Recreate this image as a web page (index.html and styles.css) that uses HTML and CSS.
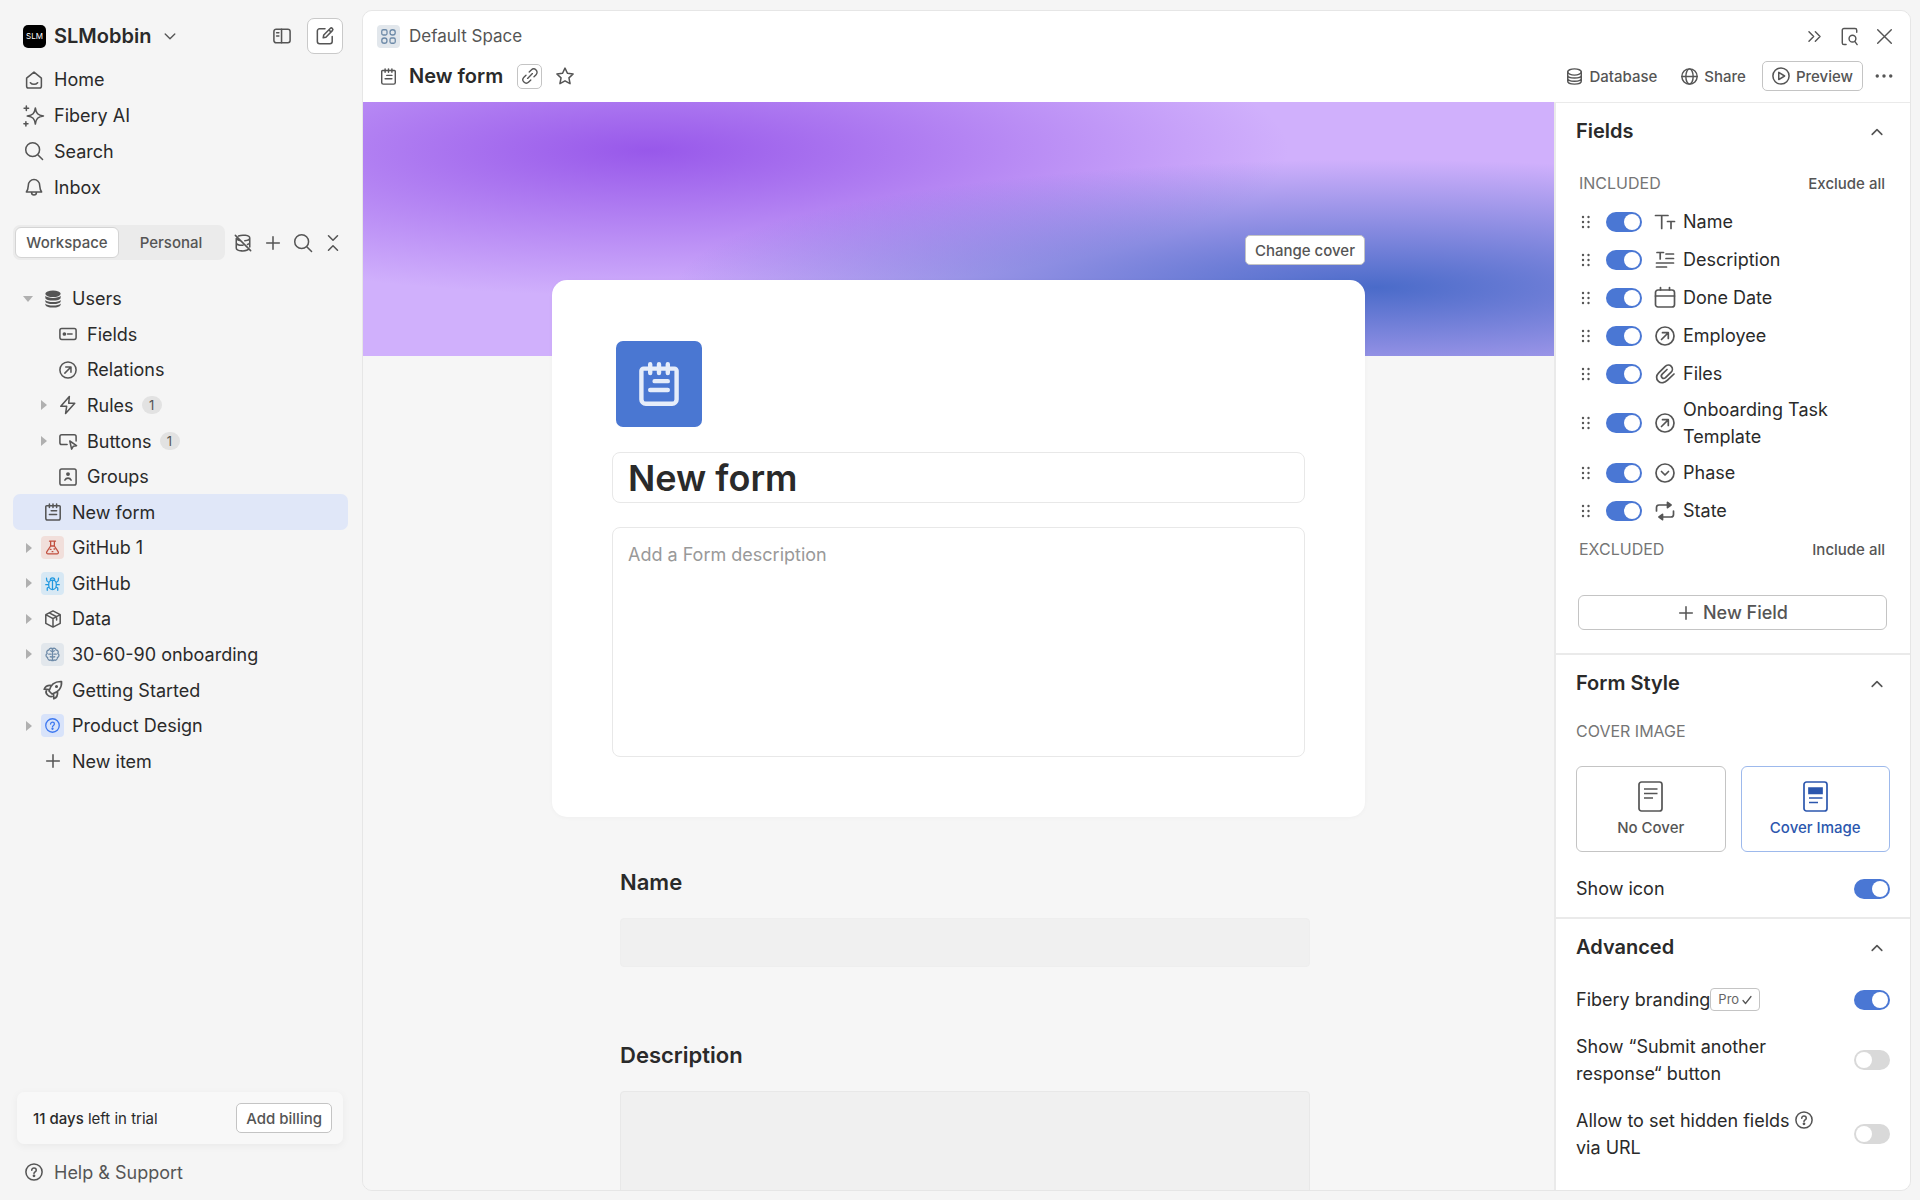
FILE: index.html
```html
<!DOCTYPE html>
<html lang="en">
<head>
  <meta charset="UTF-8">
  <meta name="viewport" content="width=device-width, initial-scale=1.0">
  <title>New form</title>
  <link rel="stylesheet" href="styles.css">
</head>
<body>
<!-- Icon sprite -->
<svg class="sprite" aria-hidden="true">
  <symbol id="i-chevron-down" viewBox="0 0 20 20"><path d="M4 7.500l6 6 6-6"/></symbol>
  <symbol id="i-chevron-up" viewBox="0 0 20 20"><path d="M4 13l6-6 6 6"/></symbol>
  <symbol id="i-panel" viewBox="0 0 20 20"><rect x="1" y="2.500" width="18" height="15" rx="2.500"/><path d="M9.500 2.500v15M4 6.500h2.500M4 10h2.500"/></symbol>
  <symbol id="i-compose" viewBox="0 0 20 20"><path d="M10 2H4a2.500 2.500 0 0 0-2.500 2.500V16A2.500 2.500 0 0 0 4 18.500h11.500A2.500 2.500 0 0 0 18 16v-5.500M8 12l.6-3.200 7.200-7.200a1.600 1.600 0 0 1 2.400 2.400L11 11.300zM14.300 3.200l2.400 2.400"/></symbol>
  <symbol id="i-home" viewBox="0 0 20 20"><path d="M1.800 8L10 1.200 18.200 8v9a2 2 0 0 1-2 2H3.800a2 2 0 0 1-2-2zM6 13c2 2.400 6 2.400 8 0"/></symbol>
  <symbol id="i-ai" viewBox="0 0 20 20"><path d="M11.500 1c.9 6.300 2.700 8.100 9 9-6.300.9-8.100 2.700-9 9-.9-6.300-2.700-8.100-9-9 6.300-.9 8.100-2.700 9-9zM1.500-1v5M-1 1.500h5M1 16.500v4.500M-1.200 18.700h4.500"/></symbol>
  <symbol id="i-search" viewBox="0 0 20 20"><circle cx="8.500" cy="8.500" r="7.700"/><path d="M14.200 14.200L19.500 19.500"/></symbol>
  <symbol id="i-bell" viewBox="0 0 20 20"><path d="M1.500 15.500c2-2.500 2-4 2.200-7.500a6.300 6.300 0 0 1 12.600 0c.2 3.500.2 5 2.200 7.500zM7.300 16c0 3.700 5.400 3.700 5.400 0"/></symbol>
  <symbol id="i-db-off" viewBox="0 0 20 20"><path d="M5 2.200C9 .6 17.500 1.200 17.500 4.500c0 1.600-2.500 2.800-5.500 3M2.500 5v10.500c0 4 11.500 4.300 14.300 1M17.500 4.500v10M2.500 10c.5 1.800 4 2.700 7.500 2.600M15 11.700c1.500-.5 2.500-1.300 2.500-2.200M3 5.500c.8 1 2.400 1.700 4.300 2M1.500 1.500l17 17"/></symbol>
  <symbol id="i-plus" viewBox="0 0 20 20"><path d="M10 3v14M3 10h14"/></symbol>
  <symbol id="i-collapse" viewBox="0 0 20 20"><path d="M5 2l5 5 5-5M5 18l5-5 5 5"/></symbol>
  <symbol id="i-db-solid" viewBox="0 0 20 20"><g fill="currentColor" stroke="none"><ellipse cx="10" cy="4.200" rx="8.500" ry="3.700"/><path d="M1.500 6.500c2 3 15 3 17 0v2c0 4.200-17 4.200-17 0zM1.500 11c2 3 15 3 17 0v1.500c0 4.200-17 4.200-17 0zM1.500 15c2 3 15 3 17 0v1c0 4.600-17 4.600-17 0z"/></g></symbol>
  <symbol id="i-fields" viewBox="0 0 20 20"><rect x="1" y="4" width="18" height="12" rx="2"/><path d="M9.500 10h5"/><circle cx="6" cy="10" r="1.200" fill="currentColor"/></symbol>
  <symbol id="i-relation" viewBox="0 0 20 20"><circle cx="10" cy="10" r="9"/><path d="M6.500 13.500l6.500-6.500M7.500 6.700h5.800v5.800"/></symbol>
  <symbol id="i-bolt" viewBox="0 0 20 20"><path d="M11.500.5L2 11.500h6.500l-1.200 8L17.500 8H10.800z"/></symbol>
  <symbol id="i-button" viewBox="0 0 20 20"><path d="M9 14H3a2 2 0 0 1-2-2V5a2 2 0 0 1 2-2h14a2 2 0 0 1 2 2v5M12 10l7.500 5.200-3.700.7-1.800 3.200z"/></symbol>
  <symbol id="i-group" viewBox="0 0 20 20"><rect x="1" y="1" width="18" height="18" rx="2"/><circle cx="10" cy="6.800" r="1.300" fill="currentColor"/><path d="M6.500 13.500c1.500-3 5.500-3 7 0"/></symbol>
  <symbol id="i-form" viewBox="0 0 20 20"><path d="M3 3h14a1 1 0 0 1 1 1v13a2 2 0 0 1-2 2H4a2 2 0 0 1-2-2V4a1 1 0 0 1 1-1zM6 1v4M10 1v4M14 1v4M8 8.700h6M6 12.700h8"/></symbol>
  <symbol id="i-flask" viewBox="0 0 20 20"><path d="M6 1.500h8M7.500 1.500V8L2.500 15.500c-1 1.700 0 3 1.700 3h11.600c1.700 0 2.700-1.300 1.700-3L12.500 8V1.500M7.500 8h5M7 12.500h1M12 12h1M9.500 15.500h1"/></symbol>
  <symbol id="i-bug" viewBox="0 0 20 20"><path d="M5 10.500a5 5 0 0 1 10 0v2.500a5 5 0 0 1-10 0zM10 6v12M7 5.500a3 3 0 0 1 6 0M5 8.500L2.500 6.500 2 3M15 8.500l2.500-2L18 3M5 11.500H1M15 11.500h4M5.500 14.500L3 16v3M14.500 14.500L17 16v3"/></symbol>
  <symbol id="i-box" viewBox="0 0 20 20"><path d="M10 1l8 4.200v9.600L10 19l-8-4.200V5.200zM2 5.200l8 4.300 8-4.300M10 9.500V19M5.800 3.200l8.200 4.300v3.500"/></symbol>
  <symbol id="i-brain" viewBox="0 0 20 20"><path d="M10 2v16M10 3C8.500.8 5.500 1.500 5.300 4 2.500 4 1.500 7 3 8.500 .5 10 1 13.500 3.500 14c-.5 2.500 2.500 4.500 4.300 3.200C8.500 18.500 10 18 10 18M10 3c1.500-2.200 4.500-1.500 4.700 1C17.500 4 18.500 7 17 8.500c2.500 1.500 2 5-.5 5.500.5 2.500-2.500 4.500-4.300 3.200-.7 1.300-2.200.8-2.200.8M5 9.500h3M15 9.500h-3M10 6.500L7.500 5M10 13.500L7 13M10 6.500L12.500 5M10 13.500l3-.5"/></symbol>
  <symbol id="i-rocket" viewBox="0 0 20 20"><path d="M6 11c1.500-6 6-9.800 12.500-9.500C19 8 15 12.500 9 14zM6.200 9.500l-5-.3C2.500 6 4.500 5 8.500 5.500M10.500 13.800l.3 5c3.200-1.300 4.200-3.300 3.700-7.300M3.500 10.500c-1 1.500-.5 3 1 4.500s3 2 4.500 1.500"/><circle cx="13.500" cy="6.500" r=".7" fill="currentColor"/></symbol>
  <symbol id="i-help" viewBox="0 0 20 20"><circle cx="10" cy="10" r="9"/><path d="M7.500 8c0-3.300 5-3.300 5 0 0 1.900-2.500 1.900-2.500 3.700"/><circle cx="10" cy="14.300" r=".7" fill="currentColor"/></symbol>
  <symbol id="i-space" viewBox="0 0 20 20"><rect x="1" y="1" width="7" height="7" rx="2"/><circle cx="15.500" cy="4.500" r="3.500"/><circle cx="4.500" cy="15.500" r="3.500"/><rect x="12" y="12" width="7" height="7" rx="2"/></symbol>
  <symbol id="i-link" viewBox="0 0 20 20"><path d="M9 5l2.600-2.600a4.200 4.200 0 0 1 6 6L15 11M11 15l-2.600 2.600a4.200 4.200 0 0 1-6-6L5 9M7 13l6-6"/></symbol>
  <symbol id="i-star" viewBox="0 0 20 20"><path d="M10 1.200l2.700 5.700 6.300.9-4.600 4.300 1.200 6.400L10 15.400l-5.600 3.100 1.200-6.400L1 7.800l6.300-.9z"/></symbol>
  <symbol id="i-forward" viewBox="0 0 20 20"><path d="M3.500 4.500L9 10l-5.500 5.500M11 4.500l5.500 5.500-5.500 5.500"/></symbol>
  <symbol id="i-page-search" viewBox="0 0 20 20"><path d="M6 19.500H3.500a2 2 0 0 1-2-2V2.500a2 2 0 0 1 2-2h13a2 2 0 0 1 2 2V5"/><circle cx="13.500" cy="12.500" r="4"/><path d="M16.200 15.700L19 19.500"/></symbol>
  <symbol id="i-close" viewBox="0 0 20 20"><path d="M2 2l16 16M18 2L2 18"/></symbol>
  <symbol id="i-db" viewBox="0 0 20 20"><ellipse cx="10" cy="4.700" rx="8" ry="3.700"/><path d="M2 4.700v10.600c0 4.900 16 4.900 16 0V4.700M2 8.500c0 4.500 16 4.500 16 0M2 12c0 4.700 16 4.700 16 0"/></symbol>
  <symbol id="i-globe" viewBox="0 0 20 20"><circle cx="10" cy="10" r="9"/><ellipse cx="10" cy="10" rx="4.300" ry="9"/><path d="M1 10h18"/></symbol>
  <symbol id="i-play" viewBox="0 0 20 20"><circle cx="10" cy="10" r="9"/><path d="M7.500 6v8l6.500-4z"/></symbol>
  <symbol id="i-dots" viewBox="0 0 20 20"><g fill="currentColor" stroke="none"><circle cx="2.500" cy="10" r="1.900"/><circle cx="10" cy="10" r="1.900"/><circle cx="17.500" cy="10" r="1.900"/></g></symbol>
  <symbol id="i-grip" viewBox="0 0 10 16"><g fill="currentColor" stroke="none"><circle cx="2" cy="3" r="1.200"/><circle cx="7.500" cy="3" r="1.200"/><circle cx="2" cy="8" r="1.200"/><circle cx="7.500" cy="8" r="1.200"/><circle cx="2" cy="13" r="1.200"/><circle cx="7.500" cy="13" r="1.200"/></g></symbol>
  <symbol id="i-text" viewBox="0 0 20 20"><path d="M.5 3.500H13M6.700 3.500v13M12.500 9.500h7M16 9.500v7"/></symbol>
  <symbol id="i-rich" viewBox="0 0 20 20"><path d="M2 2.500h6.500M5.200 2.500V9M11 4h7.500M11 8.500h7.500M1.500 13h17M1.500 17h10"/></symbol>
  <symbol id="i-date" viewBox="0 0 20 20"><rect x="0.500" y="2" width="19" height="17" rx="2.500"/><path d="M.5 8h19M5.500-.5V2M14.500-.5V2"/></symbol>
  <symbol id="i-clip" viewBox="0 0 20 20"><path d="M19 10l-6.500 6.200c-2.600 2.500-6.400 3.500-9 1.200-2.900-2.600-2.200-6.200.2-8.600L10 2.600c1.800-1.700 4.600-2 6.300-.3 1.700 1.800 1.300 4.400-.4 6.100l-5.400 5.200c-1 .9-2.600 1-3.500 0-.9-1-.8-2.500.2-3.500L12 5.500"/></symbol>
  <symbol id="i-select" viewBox="0 0 20 20"><circle cx="10" cy="10" r="9"/><path d="M6.500 8.500L10 12l3.500-3.500"/></symbol>
  <symbol id="i-state" viewBox="0 0 20 20"><path d="M1.500 10V6.500a2.500 2.500 0 0 1 2.500-2.500h11M18.500 10v3.500A2.500 2.500 0 0 1 16 16H5"/><path d="M12.500 1.300L16 4l-3.500 2.700zM7.500 13.300L4 16l3.500 2.700z" fill="currentColor"/></symbol>
  <symbol id="i-check" viewBox="0 0 20 20"><path d="M2 11l5 6L18 3"/></symbol>
</svg>

<div class="app">
  <aside class="sidebar">
    <header class="brand">
      <button class="workspace-button">
        <span class="logo">SLM</span>
        <strong>SLMobbin</strong>
        <svg class="icon small"><use href="#i-chevron-down"/></svg>
      </button>
      <button class="icon-button" aria-label="Toggle sidebar"><svg class="icon"><use href="#i-panel"/></svg></button>
      <button class="compose" aria-label="Create"><svg class="icon"><use href="#i-compose"/></svg></button>
    </header>

    <nav class="main-nav">
      <a href="#"><svg class="icon"><use href="#i-home"/></svg>Home</a>
      <a href="#"><svg class="icon"><use href="#i-ai"/></svg>Fibery AI</a>
      <a href="#"><svg class="icon"><use href="#i-search"/></svg>Search</a>
      <a href="#"><svg class="icon"><use href="#i-bell"/></svg>Inbox</a>
    </nav>

    <div class="tree-bar">
      <div class="tabs">
        <button class="tab active">Workspace</button>
        <button class="tab">Personal</button>
      </div>
      <div class="tree-tools">
        <button class="icon-button" aria-label="Hide databases"><svg class="icon"><use href="#i-db-off"/></svg></button>
        <button class="icon-button" aria-label="Add"><svg class="icon"><use href="#i-plus"/></svg></button>
        <button class="icon-button" aria-label="Find"><svg class="icon"><use href="#i-search"/></svg></button>
        <button class="icon-button" aria-label="Collapse all"><svg class="icon"><use href="#i-collapse"/></svg></button>
      </div>
    </div>

    <ul class="tree">
      <li><a href="#"><span class="arrow open"></span><span class="glyph"><svg class="icon"><use href="#i-db-solid"/></svg></span>Users</a></li>
      <li class="nested"><a href="#"><span class="arrow none"></span><span class="glyph"><svg class="icon"><use href="#i-fields"/></svg></span>Fields</a></li>
      <li class="nested"><a href="#"><span class="arrow none"></span><span class="glyph"><svg class="icon"><use href="#i-relation"/></svg></span>Relations</a></li>
      <li class="nested"><a href="#"><span class="arrow"></span><span class="glyph"><svg class="icon"><use href="#i-bolt"/></svg></span>Rules<span class="count">1</span></a></li>
      <li class="nested"><a href="#"><span class="arrow"></span><span class="glyph"><svg class="icon"><use href="#i-button"/></svg></span>Buttons<span class="count">1</span></a></li>
      <li class="nested"><a href="#"><span class="arrow none"></span><span class="glyph"><svg class="icon"><use href="#i-group"/></svg></span>Groups</a></li>
      <li class="selected"><a href="#"><span class="arrow none"></span><span class="glyph"><svg class="icon"><use href="#i-form"/></svg></span>New form</a></li>
      <li><a href="#"><span class="arrow"></span><span class="glyph red"><svg class="icon"><use href="#i-flask"/></svg></span>GitHub 1</a></li>
      <li><a href="#"><span class="arrow"></span><span class="glyph sky"><svg class="icon"><use href="#i-bug"/></svg></span>GitHub</a></li>
      <li><a href="#"><span class="arrow"></span><span class="glyph"><svg class="icon"><use href="#i-box"/></svg></span>Data</a></li>
      <li><a href="#"><span class="arrow"></span><span class="glyph slate"><svg class="icon"><use href="#i-brain"/></svg></span>30-60-90 onboarding</a></li>
      <li><a href="#"><span class="arrow none"></span><span class="glyph"><svg class="icon large"><use href="#i-rocket"/></svg></span>Getting Started</a></li>
      <li><a href="#"><span class="arrow"></span><span class="glyph blue"><svg class="icon"><use href="#i-help"/></svg></span>Product Design</a></li>
      <li><a href="#"><span class="arrow none"></span><span class="glyph"><svg class="icon"><use href="#i-plus"/></svg></span>New item</a></li>
    </ul>

    <div class="trial">
      <span><b>11 days</b> left in trial</span>
      <button class="outline-button">Add billing</button>
    </div>
    <a class="help" href="#"><svg class="icon"><use href="#i-help"/></svg>Help &amp; Support</a>
  </aside>

  <main class="panel">
    <header class="panel-header">
      <div class="header-row">
        <span class="glyph slate"><svg class="icon"><use href="#i-space"/></svg></span>
        <a class="crumb" href="#">Default Space</a>
        <div class="window-tools">
          <button class="icon-button" aria-label="Collapse panel"><svg class="icon"><use href="#i-forward"/></svg></button>
          <button class="icon-button" aria-label="Peek"><svg class="icon"><use href="#i-page-search"/></svg></button>
          <button class="icon-button" aria-label="Close"><svg class="icon"><use href="#i-close"/></svg></button>
        </div>
      </div>
      <div class="header-row title-row">
        <span class="glyph"><svg class="icon"><use href="#i-form"/></svg></span>
        <h1>New form</h1>
        <button class="link-button" aria-label="Copy link"><svg class="icon small"><use href="#i-link"/></svg></button>
        <button class="icon-button" aria-label="Favorite"><svg class="icon"><use href="#i-star"/></svg></button>
        <div class="actions">
          <button class="action"><svg class="icon"><use href="#i-db"/></svg>Database</button>
          <button class="action"><svg class="icon"><use href="#i-globe"/></svg>Share</button>
          <button class="outline-button preview"><svg class="icon"><use href="#i-play"/></svg>Preview</button>
          <button class="icon-button" aria-label="More"><svg class="icon"><use href="#i-dots"/></svg></button>
        </div>
      </div>
    </header>

    <div class="panel-body">
      <section class="canvas">
        <div class="cover">
          <div class="cover-inner"><button class="outline-button">Change cover</button></div>
        </div>
        <div class="form">
          <div class="card">
            <div class="form-icon"><svg class="icon"><use href="#i-form"/></svg></div>
            <input class="form-title" type="text" value="New form" aria-label="Form title">
            <textarea class="form-description" placeholder="Add a Form description" aria-label="Form description"></textarea>
          </div>
          <div class="question">
            <label for="q-name">Name</label>
            <input id="q-name" type="text">
          </div>
          <div class="question">
            <label for="q-description">Description</label>
            <textarea id="q-description"></textarea>
          </div>
        </div>
      </section>

      <aside class="settings">
        <section>
          <header><h2>Fields</h2><button class="icon-button" aria-label="Collapse Fields"><svg class="icon"><use href="#i-chevron-up"/></svg></button></header>
          <div class="group-row"><span class="caps">Included</span><button class="text-button">Exclude all</button></div>
          <ul class="field-list">
            <li><svg class="grip"><use href="#i-grip"/></svg><input class="toggle" type="checkbox" id="f-name" checked><label for="f-name"><svg class="icon large"><use href="#i-text"/></svg>Name</label></li>
            <li><svg class="grip"><use href="#i-grip"/></svg><input class="toggle" type="checkbox" id="f-description" checked><label for="f-description"><svg class="icon large"><use href="#i-rich"/></svg>Description</label></li>
            <li><svg class="grip"><use href="#i-grip"/></svg><input class="toggle" type="checkbox" id="f-date" checked><label for="f-date"><svg class="icon large"><use href="#i-date"/></svg>Done Date</label></li>
            <li><svg class="grip"><use href="#i-grip"/></svg><input class="toggle" type="checkbox" id="f-employee" checked><label for="f-employee"><svg class="icon large"><use href="#i-relation"/></svg>Employee</label></li>
            <li><svg class="grip"><use href="#i-grip"/></svg><input class="toggle" type="checkbox" id="f-files" checked><label for="f-files"><svg class="icon large"><use href="#i-clip"/></svg>Files</label></li>
            <li><svg class="grip"><use href="#i-grip"/></svg><input class="toggle" type="checkbox" id="f-template" checked><label for="f-template"><svg class="icon large"><use href="#i-relation"/></svg>Onboarding Task Template</label></li>
            <li><svg class="grip"><use href="#i-grip"/></svg><input class="toggle" type="checkbox" id="f-phase" checked><label for="f-phase"><svg class="icon large"><use href="#i-select"/></svg>Phase</label></li>
            <li><svg class="grip"><use href="#i-grip"/></svg><input class="toggle" type="checkbox" id="f-state" checked><label for="f-state"><svg class="icon large"><use href="#i-state"/></svg>State</label></li>
          </ul>
          <div class="group-row"><span class="caps">Excluded</span><button class="text-button">Include all</button></div>
          <button class="new-field"><svg class="icon"><use href="#i-plus"/></svg>New Field</button>
        </section>

        <section>
          <header><h2>Form Style</h2><button class="icon-button" aria-label="Collapse Form Style"><svg class="icon"><use href="#i-chevron-up"/></svg></button></header>
          <span class="caps cover-label">Cover image</span>
          <div class="cover-options">
            <button class="cover-option">
              <svg class="page-icon" viewBox="0 0 25 31"><rect x="1" y="1" width="23" height="29" rx="2.500"/><path d="M6 8h13.500M6 12.500h13.500M6 17h9"/></svg>
              No Cover
            </button>
            <button class="cover-option chosen">
              <svg class="page-icon" viewBox="0 0 25 31"><rect x="1" y="1" width="23" height="29" rx="2.500"/><path d="M6 7h13v5.500H6z" fill="currentColor"/><path d="M6 17h13.500M6 21.500h9"/></svg>
              Cover Image
            </button>
          </div>
          <div class="option-row show-icon"><label for="o-icon">Show icon</label><input class="toggle" type="checkbox" id="o-icon" checked></div>
        </section>

        <section>
          <header><h2>Advanced</h2><button class="icon-button" aria-label="Collapse Advanced"><svg class="icon"><use href="#i-chevron-up"/></svg></button></header>
          <div class="options">
            <div class="option-row"><label for="o-brand">Fibery branding</label><span class="pro">Pro <svg class="icon tiny"><use href="#i-check"/></svg></span><input class="toggle" type="checkbox" id="o-brand" checked></div>
            <div class="option-row"><label for="o-again">Show “Submit another response“ button</label><input class="toggle" type="checkbox" id="o-again"></div>
            <div class="option-row"><label for="o-hidden">Allow to set hidden fields <svg class="icon inline"><use href="#i-help"/></svg> via URL</label><input class="toggle" type="checkbox" id="o-hidden"></div>
          </div>
        </section>
      </aside>
    </div>
  </main>
</div>
</body>
</html>
```

FILE: styles.css
```css
* {
  box-sizing: border-box;
}

body {
  margin: 0;
  background: #f5f5f5;
  color: #2a2a2a;
  font-family: Inter, "Liberation Sans", sans-serif;
  font-size: 18px;
  line-height: 27px;
}

button, input, textarea {
  font: inherit;
  color: inherit;
}

button {
  display: flex;
  align-items: center;
  padding: 0;
  border: 0;
  background: none;
  color: #555;
  white-space: nowrap;
  cursor: pointer;
}

a {
  color: inherit;
  text-decoration: none;
}

ul {
  margin: 0;
  padding: 0;
  list-style: none;
}

h1, h2 {
  margin: 0;
  font-size: 20px;
  font-weight: 600;
}

.sprite {
  display: none;
}

/* Icons */
.icon {
  flex: none;
  width: 18px;
  height: 18px;
  overflow: visible;
  fill: none;
  stroke: currentColor;
  stroke-width: 1.7;
  stroke-linecap: round;
  stroke-linejoin: round;
  color: #555;
}

.icon.small {
  width: 16px;
  height: 16px;
}

.icon.large {
  width: 20px;
  height: 20px;
}

.icon.tiny {
  width: 10px;
  height: 10px;
  stroke-width: 2.5;
}

.icon.inline {
  vertical-align: -2px;
}

symbol {
  overflow: visible;
}

.glyph {
  display: flex;
  flex: none;
  align-items: center;
  justify-content: center;
  width: 23px;
  height: 23px;
  border-radius: 4px;
}

.glyph.red .icon, .glyph.sky .icon, .glyph.slate .icon, .glyph.blue .icon {
  width: 15px;
  height: 15px;
}

.glyph.red {
  background: #f1dfdb;
} .glyph.red .icon {
  color: #c14f3f;
}

.glyph.sky {
  background: #d7e8f4;
} .glyph.sky .icon {
  color: #2299e0;
}

.glyph.slate {
  background: #e2e7ec;
} .glyph.slate .icon {
  color: #6d8aa8;
}

.glyph.blue {
  background: #d8e3fa;
} .glyph.blue .icon {
  color: #3d78f0;
}

/* Layout */
.app {
  display: flex;
  height: 100vh;
}

.sidebar {
  display: flex;
  flex: none;
  flex-direction: column;
  width: 362px;
  padding: 18px 14px 10px 13px;
}

/* Sidebar */
.brand {
  display: flex;
  align-items: center;
  gap: 16px;
  height: 36px;
  padding: 0 5px 0 10px;
}

.workspace-button {
  gap: 8px;
  margin-right: auto;
  color: #2a2a2a;
  font-size: 20px;
} .workspace-button strong {
  font-weight: 600;
}

.workspace-button .icon {
  margin-left: 3px;
}

.logo {
  display: flex;
  align-items: center;
  justify-content: center;
  width: 23px;
  height: 23px;
  border-radius: 5px;
  background: #000;
  color: #fff;
  font-size: 8px;
}

.compose {
  justify-content: center;
  width: 36px;
  height: 36px;
  border: 1px solid #c9c9c9;
  border-radius: 7px;
  background: #fff;
}

.main-nav {
  display: grid;
  grid-auto-rows: 1fr;
  height: 143px;
  margin: 8px 0 20px;
}

.main-nav a, .help {
  display: flex;
  align-items: center;
  gap: 11px;
  padding-left: 12px;
}

.tree-bar {
  display: flex;
  align-items: center;
  justify-content: space-between;
  padding-right: 6px;
}

.tabs {
  display: flex;
  height: 35px;
  padding: 2px;
  border-radius: 7px;
  background: #ebebeb;
}

.tab {
  justify-content: center;
  width: 104px;
  border: 1px solid transparent;
  border-radius: 6px;
  font-size: 15px;
  font-weight: 500;
} .tab.active {
  border-color: #d4d4d4;
  background: #fff;
}

.tree-tools {
  display: flex;
  gap: 12px;
}

.tree {
  display: grid;
  grid-auto-rows: 1fr;
  height: 498px;
  margin-top: 21px;
}

.tree li {
  border-radius: 7px;
}

.tree a {
  display: flex;
  align-items: center;
  height: 100%;
  padding-left: 8px;
}

.tree .nested a {
  padding-left: 23px;
}

.tree .selected {
  background: #e0e7f8;
}

.tree .glyph {
  margin: 0 8px 0 5px;
}

.arrow {
  width: 0;
  height: 0;
  margin: 0 4px 0 5px;
  border: 5px solid transparent;
  border-left: 6px solid #b0b0b0;
  border-right: 0;
} .arrow.open {
  margin: 0 3px 0 2px;
  border: 5px solid transparent;
  border-top: 6px solid #b0b0b0;
  border-bottom: 0;
} .arrow.none {
  border-color: transparent;
}

.count {
  width: 20px;
  height: 18px;
  margin-left: 8px;
  border-radius: 9px;
  background: #e2e2e2;
  color: #555;
  font-size: 13px;
  line-height: 18px;
  text-align: center;
}

.trial {
  display: flex;
  align-items: center;
  justify-content: space-between;
  height: 52px;
  margin: auto 5px 10px 4px;
  padding: 0 11px 0 16px;
  border-radius: 7px;
  background: #f8f8f8;
  box-shadow: 0 2px 8px rgba(0, 0, 0, .05);
  font-size: 15px;
} .trial b {
  font-weight: 500;
}

.help {
  height: 36px;
  color: #555;
}

.outline-button {
  gap: 6px;
  height: 30px;
  padding: 0 9px;
  border: 1px solid #c4c4c4;
  border-radius: 5px;
  background: #fff;
  font-size: 15px;
  font-weight: 500;
}

/* Panel */
.panel {
  display: flex;
  flex: 1;
  flex-direction: column;
  min-width: 0;
  margin: 10px 9px 9px 0;
  border: 1px solid #e6e6e6;
  border-radius: 10px;
  overflow: hidden;
}

.panel-header {
  display: flex;
  flex-direction: column;
  gap: 10px;
  padding: 10px 17px 11px 14px;
  background: #fff;
}

.header-row {
  display: flex;
  align-items: center;
  height: 30px;
}

.crumb {
  margin-left: 9px;
  color: #555;
  font-size: 17px;
}

.title-row h1 {
  margin: 0 14px 0 9px;
}

.title-row > .glyph .icon {
  width: 17px;
  height: 17px;
}

.link-button {
  justify-content: center;
  width: 25px;
  height: 25px;
  margin-right: 14px;
  border: 1px solid #c4c4c4;
  border-radius: 5px;
}

.window-tools {
  display: flex;
  gap: 18px;
  margin-left: auto;
} .window-tools .icon {
  width: 17px;
  height: 17px;
}

.actions {
  display: flex;
  align-items: center;
  gap: 24px;
  margin-left: auto;
}

.action {
  gap: 6px;
  font-size: 15px;
  font-weight: 500;
} .action .icon {
  width: 17px;
  height: 17px;
}

.preview {
  margin: 0 -12px 0 -8px;
}

.panel-body {
  display: flex;
  flex: 1;
  min-height: 0;
}

/* Form preview */
.canvas {
  flex: 1;
  min-width: 0;
  overflow: hidden;
  background: #f6f6f6;
}

.cover {
  height: 254px;
  padding-bottom: 91px;
  background:
    radial-gradient(ellipse 700px 128px at 85% 73%, #4a6bc9, rgba(208, 176, 252, 0)),
    radial-gradient(ellipse 640px 146px at 24% 19%, #9858ea, rgba(208, 176, 252, 0)),
    #d0b0fc;
}

.cover-inner, .form {
  max-width: 813px;
  margin: 0 auto;
}

.cover-inner {
  display: flex;
  align-items: flex-end;
  justify-content: flex-end;
  height: 100%;
}

.form {
  margin-top: -76px;
}

.card {
  display: flex;
  flex-direction: column;
  padding: 61px 60px 60px;
  border-radius: 15px;
  background: #fff;
  box-shadow: 0 1px 4px rgba(0, 0, 0, .03);
}

.form-icon {
  display: flex;
  align-items: center;
  justify-content: center;
  width: 86px;
  height: 86px;
  margin: 0 4px 25px;
  border-radius: 7px;
  background: #4a77d2;
} .form-icon .icon {
  width: 44px;
  height: 44px;
  stroke-width: 2;
  color: #e6edfa;
}

.form-title, .form-description {
  width: 100%;
  padding: 0 15px;
  border: 1px solid #e8e8e8;
  border-radius: 8px;
  background: #fff;
}

.form-title {
  height: 51px;
  margin-bottom: 24px;
  font-size: 36px;
  font-weight: 600;
}

.form-description {
  height: 230px;
  padding-top: 13px;
  resize: none;
} .form-description::placeholder {
  color: #999;
  opacity: 1;
}

.question {
  display: flex;
  flex-direction: column;
  gap: 21px;
  margin: 50px 55px 73px 68px;
} .question label {
  font-size: 22px;
  font-weight: 600;
  line-height: 30px;
}

.question input, .question textarea {
  height: 49px;
  border: 1px solid #eee;
  border-radius: 4px;
  background: #f0f0f0;
  resize: none;
} .question textarea {
  height: 123px;
  border-color: #e8e8e8;
}

/* Settings */
.settings {
  flex: none;
  width: 356px;
  border-top: 1px solid #eaeaea;
  border-left: 2px solid #eaeaea;
  overflow: hidden;
  background: #fff;
}

.settings section {
  padding: 0 20px;
  border-bottom: 2px solid #eaeaea;
} .settings section:last-child {
  border-bottom: 0;
}

.settings header {
  display: flex;
  align-items: center;
  justify-content: space-between;
  height: 57px;
  padding-right: 5px;
}

.settings header .icon {
  width: 16px;
  stroke-width: 2;
}

.group-row {
  display: flex;
  align-items: center;
  justify-content: space-between;
  height: 38px;
  padding: 0 5px 0 3px;
}

header + .group-row {
  margin: 4px 0 1px;
}

.caps {
  color: #757575;
  font-size: 16px;
  text-transform: uppercase;
}

.text-button {
  font-size: 15px;
  font-weight: 500;
}

.field-list li {
  display: flex;
  align-items: center;
  min-height: 38px;
  padding: 3px 24px 4px 5px;
}

.field-list label {
  display: flex;
  flex: 1;
  align-items: center;
  gap: 8px;
}

.grip {
  flex: none;
  width: 10px;
  height: 16px;
  margin-right: 15px;
  color: #555;
}

.toggle {
  flex: none;
  width: 36px;
  height: 20px;
  margin: 0;
  padding: 2px;
  border-radius: 10px;
  background: #d9d9d9;
  appearance: none;
  cursor: pointer;
} .toggle::before {
  content: "";
  display: block;
  width: 16px;
  height: 16px;
  border-radius: 50%;
  background: #fff;
}

.toggle:checked {
  background: #4a77d4;
} .toggle:checked::before {
  margin-left: auto;
}

.field-list .toggle {
  margin-right: 13px;
}

.new-field {
  justify-content: center;
  gap: 8px;
  width: calc(100% - 5px);
  height: 35px;
  margin: 27px 3px 23px 2px;
  border: 1px solid #c4c4c4;
  border-radius: 6px;
  font-weight: 500;
}

.cover-label {
  display: block;
  margin: 6px 0 21px;
}

.cover-options {
  display: grid;
  grid-template-columns: 1fr 1fr;
  gap: 15px;
}

.cover-option {
  flex-direction: column;
  gap: 2px;
  height: 86px;
  padding-top: 14px;
  border: 1px solid #c4c4c4;
  border-radius: 6px;
  font-size: 15px;
  font-weight: 500;
} .cover-option.chosen {
  border-color: #9db9ec;
  color: #2c57ae;
}

.page-icon {
  width: 25px;
  height: 31px;
  fill: none;
  stroke: currentColor;
  stroke-width: 1.7;
}

.options {
  display: grid;
  gap: 20px;
  padding: 10px 0 30px;
}

.option-row {
  display: flex;
  align-items: center;
} .option-row label {
  max-width: 245px;
} .option-row .toggle {
  margin-left: auto;
}

.show-icon {
  padding: 23px 0 15px;
}

.pro {
  display: flex;
  align-items: center;
  gap: 3px;
  height: 23px;
  padding: 0 7px;
  border: 1px solid #c4c4c4;
  border-radius: 4px;
  color: #666;
  font-size: 13px;
}
```
